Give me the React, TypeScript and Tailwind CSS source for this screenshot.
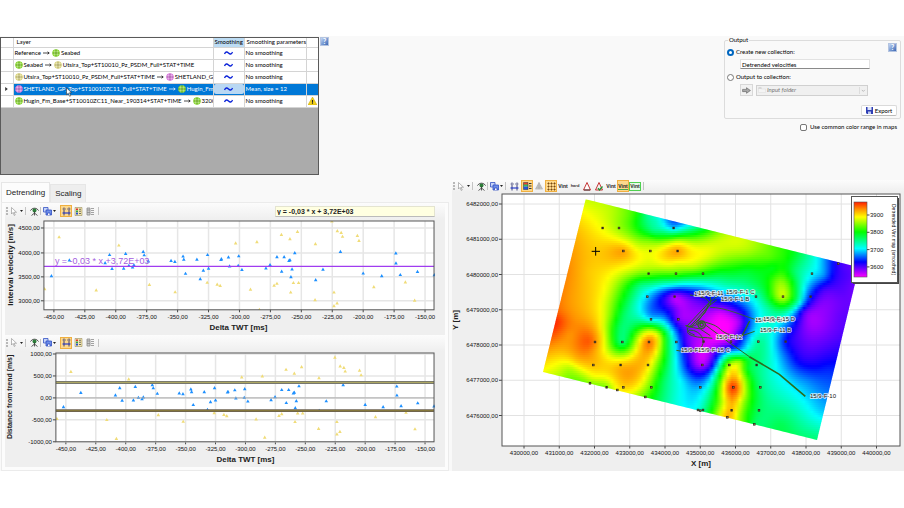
import { useState, type ReactNode } from 'react';
import clsx from 'clsx';

type Point = [number, number];
type Sample = [number, number, number];

const LIME = '#7fd321';
const KHAKI = '#d8d27a';
const PINK = '#d772dc';

const LAYERS = [
  { from: 'Reference', to: 'Seabed', toColor: LIME, params: 'No smoothing' },
  { from: 'Seabed', fromColor: LIME, to: 'Utsira_Top+ST10010_Pz_PSDM_Full+STAT+TIME', toColor: KHAKI, params: 'No smoothing' },
  { from: 'Utsira_Top+ST10010_Pz_PSDM_Full+STAT+TIME', fromColor: KHAKI, to: 'SHETLAND_GP_Top', toColor: PINK, params: 'No smoothing' },
  { from: 'SHETLAND_GP_Top+ST10010ZC11_Full+STAT+TIME', fromColor: PINK, to: 'Hugin_Fm_Base', toColor: LIME, params: 'Mean, size = 12' },
  { from: 'Hugin_Fm_Base+ST10010ZC11_Near_190314+STAT+TIME', fromColor: LIME, to: '3200_Base', toColor: LIME, params: 'No smoothing', warning: true },
];

const TREND = 3720;

// [delta TWT, distance from trend]
const INLIERS: Point[] = [
  [-452, -200], [-437.5, 125], [-408.6, 70], [-405, 235], [-403, -50], [-393.6, -45], [-392, 260], [-389.4, 15],
  [-386.4, -20], [-385.3, 25], [-377.8, 300], [-377, 230], [-373.6, 105], [-355.3, 115], [-352.2, 95], [-345.6, 205],
  [-345, 140], [-343.6, -150], [-334.4, 140], [-331.7, -260], [-329.2, -85], [-325.8, 235], [-325, -45], [-315, 135],
  [-314.6, 150], [-308.9, 185], [-308, 0], [-300.6, 210], [-301, 15], [-298, -70], [-278.6, -40], [-275.3, 30],
  [-269.7, 190], [-263.9, 190], [-265.9, -105], [-260, 115], [-259.2, 130], [-255.3, 275], [-257.5, -60], [-258.4, -220],
  [-238.4, -280], [-232.5, -65], [-218.4, 300], [-200, -145], [-185, -200], [-173.6, 270], [-173.5, 65], [-170, -175],
  [-156.1, -110], [-142.5, -180],
];

const OUTLIERS: Point[] = [
  [-457.5, -465], [-445.8, 600], [-415.8, -490], [-407.8, -920], [-397.5, 430], [-372.8, -380], [-352, -530],
  [-326.1, -335], [-318, -375], [-315.6, -400], [-303.1, 475], [-291.1, -475], [-285.9, 500], [-283.9, -890],
  [-272, -395], [-269.7, -355], [-266.1, 650], [-259.2, 560], [-258.6, -535], [-256.4, -340], [-252.2, -340],
  [-253.1, 710], [-238.6, 460], [-238.9, -690], [-225.3, 925], [-220.9, 725], [-217.8, 690], [-216.7, 610],
  [-223.6, -535], [-223.6, -815], [-221.1, -760], [-204.7, 630], [-203.4, 525], [-191.4, -425], [-165.9, -325],
  [-158.4, -700],
];

const TWT_TICKS = [-450, -425, -400, -375, -350, -325, -300, -275, -250, -225, -200, -175, -150];

// Velocity samples in map units, value 0 (low) to 100 (high)
const SAMPLES: Sample[] = [
  [137, 14, 76], [215, 33, 74], [290, 52, 62], [320, 60, 48], [360, 72, 40], [400, 80, 26], [440, 92, 38], [490, 104, 57],
  [540, 116, 72], [590, 128, 77], [640, 140, 74], [700, 153, 66], [760, 170, 58], [820, 185, 42], [860, 195, 28],
  [895, 206, 16], [940, 215, 12], [188, 99, 79], [237, 99, 72], [300, 99, 58], [340, 110, 50], [400, 99, 34],
  [430, 115, 54], [370, 118, 54], [350, 80, 44], [120, 100, 85], [110, 150, 88], [168, 168, 85], [250, 168, 89],
  [331, 168, 78], [413, 168, 89], [250, 140, 80], [290, 150, 76], [413, 135, 72], [380, 165, 84], [450, 175, 82],
  [500, 165, 79], [560, 160, 76], [620, 180, 71], [690, 190, 66], [330, 130, 66], [330, 195, 78], [85, 230, 91],
  [150, 230, 85], [220, 220, 82], [250, 200, 84], [280, 235, 72], [326, 236, 68], [408, 236, 66], [413, 205, 78],
  [489, 236, 60], [370, 215, 76], [460, 220, 72], [560, 215, 63], [540, 240, 54], [620, 225, 57], [700, 220, 58],
  [735, 200, 61], [760, 230, 52], [816, 236, 38], [850, 240, 31], [880, 240, 19], [920, 240, 14], [75, 290, 91],
  [150, 290, 85], [200, 290, 78], [240, 290, 66], [260, 270, 63], [280, 300, 50], [322, 305, 35], [300, 270, 50],
  [350, 270, 44], [400, 275, 34], [360, 300, 24], [404, 305, 6], [372, 330, 18], [440, 290, 20], [485, 305, 18],
  [480, 270, 37], [530, 300, 28], [560, 270, 45], [600, 300, 37], [648, 305, 43], [640, 265, 52], [690, 280, 62],
  [729, 305, 76], [720, 260, 71], [725, 235, 64], [760, 290, 60], [775, 320, 45], [790, 290, 38], [812, 305, 22],
  [850, 280, 16], [900, 290, 13], [945, 280, 11], [690, 340, 48], [725, 345, 52], [50, 380, 99], [55, 350, 94],
  [100, 360, 90], [150, 360, 86], [190, 370, 78], [220, 360, 66], [250, 360, 52], [290, 360, 44], [333, 373, 36],
  [370, 360, 27], [415, 373, 10], [400, 340, 13], [450, 340, 8], [510, 340, 10], [540, 355, 3], [550, 390, 0],
  [590, 345, 16], [600, 380, 8], [625, 370, 24], [650, 373, 35], [690, 390, 42], [740, 380, 32], [770, 370, 22],
  [790, 350, 15], [840, 360, 8], [900, 360, 12], [610, 330, 27], [485, 390, 6], [450, 400, 10], [90, 420, 90],
  [150, 440, 95], [40, 440, 92], [190, 430, 80], [165, 470, 88], [222, 430, 60], [247, 441, 49], [245, 400, 50],
  [275, 430, 62], [300, 400, 62], [330, 398, 66], [327, 441, 93], [300, 460, 84], [285, 465, 78], [355, 420, 76],
  [370, 440, 66], [385, 450, 52], [409, 441, 35], [400, 410, 34], [430, 440, 18], [490, 440, 4], [530, 430, 1],
  [573, 440, 8], [600, 430, 20], [620, 430, 30], [655, 440, 47], [640, 480, 50], [700, 440, 37], [737, 440, 21],
  [780, 440, 14], [840, 430, 11], [880, 430, 13], [600, 470, 35], [440, 480, 19], [485, 480, 3], [530, 475, 17],
  [487, 510, 6], [450, 520, 19], [485, 530, 16], [520, 510, 22], [545, 510, 50], [568, 510, 74], [560, 480, 40],
  [600, 500, 72], [620, 520, 58], [650, 510, 50], [700, 510, 40], [740, 480, 26], [780, 500, 19], [830, 515, 20],
  [860, 520, 22], [160, 510, 86], [110, 500, 85], [90, 520, 74], [20, 520, 80], [60, 540, 74], [130, 555, 70],
  [160, 545, 79], [200, 577, 70], [242, 510, 86], [250, 577, 84], [232, 585, 80], [324, 510, 83], [350, 510, 70],
  [375, 520, 55], [410, 520, 38], [300, 560, 82], [334, 577, 66], [316, 606, 66], [365, 560, 54], [400, 600, 43],
  [430, 560, 36], [481, 577, 33], [475, 645, 41], [520, 570, 48], [545, 580, 74], [580, 577, 99], [580, 540, 86],
  [612, 577, 76], [640, 577, 58], [661, 577, 50], [700, 560, 42], [740, 560, 37], [800, 560, 30], [850, 580, 28],
  [510, 650, 58], [540, 655, 76], [562, 667, 88], [575, 646, 87], [600, 660, 72], [625, 680, 60], [657, 646, 52],
  [643, 688, 52], [700, 650, 49], [720, 690, 53], [780, 660, 44], [800, 620, 37], [840, 650, 35], [830, 734, 50],
  [780, 720, 50], [550, 620, 76], [600, 620, 78], [575, 615, 90],
];

const WELL_MARKERS: Point[] = [
  [188, 99], [237, 99], [401, 99], [250, 168], [331, 168], [413, 168], [326, 236], [408, 236], [489, 236], [816, 236],
  [895, 206], [322, 305], [404, 305], [485, 305], [648, 305], [729, 305], [812, 305], [333, 373], [415, 373], [165, 441],
  [247, 441], [327, 441], [409, 441], [491, 440], [573, 440], [655, 440], [737, 440], [160, 510], [242, 510], [324, 510],
  [487, 510], [568, 510], [650, 510], [150, 565], [200, 577], [232, 585], [250, 577], [334, 577], [316, 606], [481, 577],
  [580, 577], [661, 577], [474, 645], [481, 647], [489, 645], [575, 646], [657, 646], [562, 667], [643, 688],
];

const WELL_LABELS = [
  { x: 694, y: 296, name: '15/9-19 A' },
  { x: 698, y: 295, name: '15/9-F-11' },
  { x: 726, y: 294, name: '15/9-F-1 C' },
  { x: 721, y: 301, name: '15/9-F-1 B' },
  { x: 755, y: 322, name: '15/9-19 SR' },
  { x: 763, y: 321, name: '15/9-F-15 D' },
  { x: 760, y: 332, name: '15/9-F-11 B' },
  { x: 716, y: 339, name: '15/9-F-12' },
  { x: 681, y: 352, name: '15/9-F-14' },
  { x: 698, y: 352, name: '15/9-F-15 C' },
  { x: 810, y: 398, name: '15/9-F-10' },
];

const COLOR_STOPS: [number, number[]][] = [
  [0, [255, 0, 255]],
  [20, [0, 0, 255]],
  [38, [0, 255, 255]],
  [60, [0, 255, 0]],
  [80, [255, 255, 0]],
  [90, [255, 150, 0]],
  [100, [255, 30, 0]],
];

function colorAt(value: number) {
  const v = Math.max(0, Math.min(100, value));
  const i = Math.max(1, COLOR_STOPS.findIndex(s => v <= s[0]));
  const [v0, c0] = COLOR_STOPS[i - 1];
  const [v1, c1] = COLOR_STOPS[i];
  const t = (v - v0) / (v1 - v0);
  return `rgb(${c0.map((c, k) => Math.round(c + (c1[k] - c) * t)).join(',')})`;
}

const kernel = (dx: number, dy: number) => {
  const r2 = dx * dx + dy * dy;
  return r2 === 0 ? 0 : r2 * Math.log(r2) * 0.5;
};

// Thin plate spline through the samples
function fitSurface(samples: Sample[]) {
  const pts = samples.map(([x, y, v]) => [x / 500, y / 500, v]);
  const n = pts.length;
  const size = n + 3;
  const m = Array.from({ length: size }, () => new Float64Array(size + 1));
  for (let i = 0; i < n; i++) {
    for (let j = 0; j < n; j++) m[i][j] = kernel(pts[i][0] - pts[j][0], pts[i][1] - pts[j][1]);
    m[i][i] = 0.0004;
    const base = [1, pts[i][0], pts[i][1]];
    base.forEach((b, k) => {
      m[i][n + k] = b;
      m[n + k][i] = b;
    });
    m[i][size] = pts[i][2];
  }
  for (let c = 0; c < size; c++) {
    let p = c;
    for (let r = c + 1; r < size; r++) if (Math.abs(m[r][c]) > Math.abs(m[p][c])) p = r;
    [m[c], m[p]] = [m[p], m[c]];
    for (let r = c + 1; r < size; r++) {
      const f = m[r][c] / m[c][c];
      if (f === 0) continue;
      for (let k = c; k <= size; k++) m[r][k] -= f * m[c][k];
    }
  }
  const w = new Float64Array(size);
  for (let r = size - 1; r >= 0; r--) {
    let s = m[r][size];
    for (let k = r + 1; k < size; k++) s -= m[r][k] * w[k];
    w[r] = s / m[r][r];
  }
  return (px: number, py: number) => {
    const x = px / 500;
    const y = py / 500;
    let s = w[n] + w[n + 1] * x + w[n + 2] * y;
    for (let i = 0; i < n; i++) s += w[i] * kernel(x - pts[i][0], y - pts[i][1]);
    return s;
  };
}

const surface = fitSurface(SAMPLES);
const STRIP = 6;
const MAP_WIDTH = 960;
const STRIPS = Array.from({ length: 122 }, (_, row) => {
  const y = 6 + row * STRIP;
  const stops = Array.from({ length: 81 }, (_, i) => colorAt(surface(i * 12, y + STRIP / 2)));
  return { y, stops };
});

function HorizonIcon({ color }: { color: string }) {
  return (
    <svg viewBox="0 0 16 16" className="size-2 shrink-0">
      <circle cx="8" cy="8" r="7.5" fill={color} />
      <path d="M5.5 1v14M10.5 1v14M1 5.5h14M1 10.5h14" stroke="#fff" strokeOpacity=".55" strokeWidth="1.2" />
      <path d="M8 1v14M1 8h14" stroke="#333" strokeOpacity=".45" strokeWidth="1" />
    </svg>
  );
}

function HelpButton() {
  return (
    <button
      aria-label="Help"
      className="flex size-[9px] shrink-0 items-center justify-center border border-[#b4c4e0] bg-linear-to-br from-[#c4d6f4] to-[#3c68b4] text-[7px] leading-none font-bold text-white"
    >
      ?
    </button>
  );
}

function LayerTable() {
  const [selected, setSelected] = useState(3);

  return (
    <div className="relative min-h-[138px] w-[35.3%] border border-[#5a5a5a] bg-[#ababab]">
      <table className="w-full table-fixed border-collapse bg-white text-left whitespace-nowrap">
        <thead>
          <tr className="h-[9px]">
            <th className="w-[12px] border-r border-b border-[#d4d4d4] p-0" />
            <th className="border-r border-b border-[#d4d4d4] p-0 pl-[3px] font-normal">Layer</th>
            <th className="w-[31px] border-r border-b border-[#d4d4d4] bg-[#bcdcf4] p-0 text-center font-normal">Smoothing</th>
            <th className="w-[62px] border-r border-b border-[#d4d4d4] p-0 pl-[2px] font-normal">Smoothing parameters</th>
            <th className="w-[12px] border-b border-[#d4d4d4] p-0" />
          </tr>
        </thead>
        <tbody>
          {LAYERS.map((layer, i) => {
            const active = i === selected;
            const cell = clsx('border-r border-b border-[#d4d4d4] p-0', active && 'bg-[#0078d7] text-white');
            return (
              <tr key={layer.from} className="h-[12px]" onClick={() => setSelected(i)}>
                <td className="border-r border-b border-[#d4d4d4] p-0">
                  {active && (
                    <svg viewBox="0 0 4 6" className="mx-auto h-1 w-[3px]"><path d="M0 0l4 3-4 3z" fill="#333" /></svg>
                  )}
                </td>
                <td className={cell}>
                  <div className="flex items-center gap-px overflow-hidden pl-px">
                    {layer.fromColor && <HorizonIcon color={layer.fromColor} />}
                    <span>{layer.from}</span>
                    <svg viewBox="0 0 14 8" className="mx-px h-1 w-[7px] shrink-0" fill="none" stroke="currentColor" strokeWidth="1.4"><path d="M0 4h12M9 1.5l3.5 2.5L9 6.5" /></svg>
                    <HorizonIcon color={layer.toColor} />
                    <span>{layer.to}</span>
                  </div>
                </td>
                <td className={cell}>
                  <button
                    aria-label="Edit smoothing"
                    className={clsx('flex h-[10px] w-full items-center justify-center', active ? 'rounded-xs bg-[#b9d8f3]' : 'bg-white')}
                  >
                    <svg viewBox="0 0 18 8" className="h-1 w-[9px]" fill="none" stroke="#0a22d8" strokeWidth="2.6"><path d="M1 6C3 1 6 1 9 4s6 3 8-2" /></svg>
                  </button>
                </td>
                <td className={clsx(cell, 'pl-px')}>{layer.params}</td>
                <td className={clsx('border-b border-[#d4d4d4] p-0', active && 'bg-[#0078d7]')}>
                  {layer.warning && (
                    <svg viewBox="0 0 16 14" className="mx-auto h-2 w-[9px]">
                      <path d="M8 0l8 14H0z" fill="#f3d21b" stroke="#c9a800" />
                      <path d="M8 5v5M8 11v1.5" stroke="#222" strokeWidth="2" />
                    </svg>
                  )}
                </td>
              </tr>
            );
          })}
        </tbody>
      </table>
      <svg viewBox="0 0 12 19" className="absolute top-[49px] left-[65px] h-[10px] w-[6px]">
        <path d="M1 1v14l3.5-3 2.5 6 2.5-1-2.5-6H11z" fill="#fff" stroke="#333" strokeWidth="1.2" />
      </svg>
    </div>
  );
}

function OutputPanel() {
  const [mode, setMode] = useState('new');
  const radio = 'size-[7px] appearance-none rounded-full border border-[#777] bg-white checked:border-2 checked:border-[#0067c0]';

  return (
    <div className="w-[177px]">
      <fieldset className="rounded-xs border border-[#dcdcdc] pr-[3px] pl-[2px] pb-[2px]">
        <legend className="ml-px px-px leading-[6px]">Output</legend>
        <div className="flex justify-between">
          <label className="mt-[5px] flex h-[8px] items-center gap-[2px]">
            <input type="radio" name="output" className={radio} checked={mode === 'new'} onChange={() => setMode('new')} />
            Create new collection:
          </label>
          <HelpButton />
        </div>
        <input
          aria-label="Collection name"
          defaultValue="Detrended velocities"
          className="mt-[3px] ml-[13px] block h-[10px] w-[130px] border border-[#e2e2e2] border-b-[#8a8a8a] bg-white pl-px"
        />
        <label className="mt-[4px] flex h-[8px] items-center gap-[2px]">
          <input type="radio" name="output" className={radio} checked={mode === 'existing'} onChange={() => setMode('existing')} />
          Output to collection:
        </label>
        <div className="mt-[3px] ml-[13px] flex items-center gap-[3px]">
          <button aria-label="Pick collection" className="flex h-[12px] w-[13px] items-center justify-center border border-[#d8d8d8] bg-[#f2f2f2]">
            <svg viewBox="0 0 16 12" className="h-[7px] w-[9px]"><path d="M1 4h7V1l7 5-7 5V8H1z" fill="#a8a8a8" stroke="#555" /></svg>
          </button>
          <div className="relative flex h-[11px] w-[112px] items-center border border-[#d0d0d0] bg-[#f0f0f0]">
            <svg viewBox="0 0 16 12" className="absolute left-px h-[6px] w-[8px]"><path d="M1 2h5l1 2h8v7H1z" fill="#f4f4f4" stroke="#ddd" /><path d="M1 2h6" stroke="#999" /></svg>
            <select disabled aria-label="Collection" className="h-full w-full appearance-none pl-[10px] text-[#777] italic">
              <option>Input folder</option>
            </select>
            <svg viewBox="0 0 10 10" className="absolute right-px size-[7px] border-l border-[#ddd]" fill="none" stroke="#999"><path d="M3 4l2.5 2.5L8 4" /></svg>
          </div>
        </div>
        <div className="mt-[9px] flex justify-end">
          <button className="flex h-[11px] w-[36px] items-center justify-center gap-[2px] rounded-xs border border-[#dadada] border-b-[#bbb] bg-white">
            <svg viewBox="0 0 14 14" className="size-[7px]"><path d="M0 0h14v14H2l-2-2z" fill="#2f3fb4" /><path d="M3 0h8v6H3z" fill="#dfe6fa" /><path d="M4 9h6v5H4z" fill="#bcc8ee" /></svg>
            Export
          </button>
        </div>
      </fieldset>
      <label className="mt-[4px] mr-[4px] flex items-center justify-end gap-[3px]">
        <input type="checkbox" className="size-[7px] appearance-none rounded-xs border border-[#777] bg-white checked:bg-[#0067c0]" />
        Use common color range in maps
      </label>
    </div>
  );
}

function ToolButton({ label, active, children }: { label: string; active?: boolean; children: ReactNode }) {
  return (
    <button
      aria-label={label}
      className={clsx('flex h-[12px] w-[12px] shrink-0 items-center justify-center', active && 'border border-[#f0b040] bg-[#fdd88c]')}
    >
      {children}
    </button>
  );
}

const Separator = () => <span className="mx-[2px] h-[8px] w-px shrink-0 bg-[#c4c4c4]" />;

const Caret = () => (
  <svg viewBox="0 0 6 4" className="h-[2px] w-[3px] shrink-0"><path d="M0 0h6L3 4z" fill="#222" /></svg>
);

const AxesIcon = () => (
  <svg viewBox="0 0 18 18" className="size-[9px]">
    <path d="M4 1v16M14 1v16" stroke="#2a2f6c" strokeWidth="1.8" />
    <path d="M1 12h16" stroke="#1a30c8" strokeWidth="2.2" />
    <path d="M1 4h2M6 4h2M10 4h2M15 4h2" stroke="#2a2f6c" strokeWidth="1.2" />
  </svg>
);

function BaseTools() {
  return (
    <>
      <span className="h-[8px] w-[2px] shrink-0 border-l-2 border-dotted border-[#b8b8b8]" />
      <ToolButton label="Select">
        <svg viewBox="0 0 12 18" className="h-[9px] w-[6px]"><path d="M1 1v13l3-3 2.5 6 2-1L6 10.500h5z" fill="#fff" stroke="#8a8a8a" strokeWidth="1.2" /></svg>
      </ToolButton>
      <Caret />
      <Separator />
      <ToolButton label="Visibility">
        <svg viewBox="0 0 18 18" className="size-[9px]">
          <path d="M1 7c4-6 12-6 16 0" fill="none" stroke="#333" strokeWidth="2" />
          <circle cx="9" cy="7" r="4" fill="#2d7f3a" />
          <path d="M9 9v8M9 12l-6 5M9 12l6 5" stroke="#333" strokeWidth="1.6" />
        </svg>
      </ToolButton>
      <span className="h-[8px] w-px shrink-0 bg-[#c4c4c4]" />
      <ToolButton label="Copy">
        <svg viewBox="0 0 18 18" className="size-[9px]" stroke="#2a49c0" strokeWidth="1.5">
          <path d="M1 1h9v9H1z" fill="#c6d4f8" />
          <path d="M6 6h11v10H6z" fill="#6f8fe8" />
          <path d="M9 16v-4h5v4" fill="#fff" />
        </svg>
      </ToolButton>
      <Caret />
    </>
  );
}

const LegendIcon = () => (
  <svg viewBox="0 0 18 18" className="size-[9px]">
    <path d="M2 1h14v16H2z" fill="#f3e6ae" stroke="#887c4a" />
    <path d="M4 3h4v3H4z" fill="#e03030" /><path d="M4 7h4v3H4z" fill="#2fa040" /><path d="M4 11h4v4H4z" fill="#2850d0" />
    <path d="M10 4.500h4M10 8.500h4M10 13h4" stroke="#444" strokeWidth="1.5" />
  </svg>
);

function ChartToolbar({ children }: { children?: ReactNode }) {
  return (
    <div className="flex h-[16px] items-center bg-linear-to-b from-[#fcfcfc] to-[#efefef] pl-px">
      <BaseTools />
      <span className="w-[4px]" />
      <ToolButton label="Axes" active><AxesIcon /></ToolButton>
      <ToolButton label="Legend"><LegendIcon /></ToolButton>
      <ToolButton label="List">
        <svg viewBox="0 0 18 18" className="size-[9px]" stroke="#8c8c8c" strokeWidth="1.6"><path d="M2 2h6v14H2z" fill="#ccc" /><path d="M2 6h6M2 11h6M10 3h6M10 7h6M10 11h6M10 15h6" /></svg>
      </ToolButton>
      <Separator />
      {children}
    </div>
  );
}

interface ScatterProps {
  viewBox: string;
  left: number;
  top: number;
  bottom: number;
  x0: number;
  xStep: number;
  yTicks: { y: number; label: string }[];
  toY: (distance: number) => number;
  clipId: string;
  children: ReactNode;
}

function Scatter({ viewBox, left, top, bottom, x0, xStep, yTicks, toY, clipId, children }: ScatterProps) {
  const toX = (twt: number) => x0 + ((twt + 450) / 25) * xStep;
  const right = 435;
  const marker = ([twt, d]: Point) => `M${toX(twt) - 1.8} ${toY(d) + 1.6}h3.6l-1.800-3.200z`;

  return (
    <svg viewBox={viewBox} className="block w-full bg-[#efefef] text-[6px]" fill="#111">
      <clipPath id={clipId}><rect x={left} y={top} width={right - left + 1} height={bottom - top} /></clipPath>
      <rect x={left} y={top} width={right - left} height={bottom - top} fill="#fff" />
      {TWT_TICKS.map(t => (
        <g key={t}>
          <path d={`M${toX(t)} ${top}V${bottom}`} stroke="#e6e6e6" strokeWidth="1.5" />
          <path d={`M${toX(t)} ${bottom}v2.500`} stroke="#444" />
          <text x={toX(t)} y={bottom + 9} textAnchor="middle">{t},00</text>
        </g>
      ))}
      {yTicks.map(t => (
        <g key={t.label}>
          <path d={`M${left} ${t.y}H${right}`} stroke="#e6e6e6" strokeWidth="1.5" />
          <path d={`M${left - 3} ${t.y}H${left}`} stroke="#444" />
          <text x={left - 4} y={t.y + 2} textAnchor="end">{t.label}</text>
        </g>
      ))}
      <g clipPath={`url(#${clipId})`}>
        <path d={OUTLIERS.map(marker).join('')} fill="#f0dc78" />
        <path d={INLIERS.map(marker).join('')} fill="#1e90ff" />
      </g>
      {children}
      <rect x={left} y={top} width={right - left} height={bottom - top} fill="none" stroke="#555" />
    </svg>
  );
}

function DetrendingPanel() {
  const [tab, setTab] = useState('Detrending');

  return (
    <section className="w-1/2 pr-[3px] pl-px">
      <div role="tablist" className="flex items-end pt-[2px] text-[8px]">
        {['Detrending', 'Scaling'].map(name => (
          <button
            key={name}
            role="tab"
            aria-selected={tab === name}
            onClick={() => setTab(name)}
            className={clsx('border border-b-0 border-[#e6e6e6] px-[4px]', tab === name ? 'h-[20px] bg-[#fcfcfc]' : 'h-[18px] bg-[#eeeeee]')}
          >
            {name}
          </button>
        ))}
      </div>
      <div className="border border-[#ebebeb] bg-[#fcfcfc] px-[3px] pb-[3px]">
        <ChartToolbar>
          <input
            readOnly
            aria-label="Trend equation"
            value="y = -0,03 * x + 3,72E+03"
            className="mr-[10px] ml-auto h-[11px] w-[160px] border border-[#e4e4d0] border-b-[#bbb] bg-[#ffffe1] px-px text-[7px] font-bold text-[#222]"
          />
        </ChartToolbar>
        <Scatter
          viewBox="5 219 441 116"
          left={44}
          top={221}
          bottom={310}
          x0={54}
          xStep={31}
          clipId="velocity-plot"
          toY={d => 228 + (4500 - TREND - d) * 0.0488}
          yTicks={[{ y: 228, label: '4500,00' }, { y: 253, label: '4000,00' }, { y: 277, label: '3500,00' }, { y: 301, label: '3000,00' }]}
        >
          <path d="M44 266.500H435" stroke="#a03cf0" strokeWidth="1.400" />
          <text x="55" y="264" fill="#a45ce0" className="text-[9px]">y = -0,03 * x +3,72E+03</text>
          <text x="239" y="330" textAnchor="middle" className="text-[8px] font-bold" fill="#222">Delta TWT [ms]</text>
          <text transform="translate(13 265) rotate(-90)" textAnchor="middle" className="text-[8px] font-bold" fill="#222">Interval velocity [m/s]</text>
        </Scatter>
        <ChartToolbar />
        <Scatter
          viewBox="5 350 441 117"
          left={56}
          top={352}
          bottom={441}
          x0={66}
          xStep={30}
          clipId="distance-plot"
          toY={d => 397 - d * 0.0442}
          yTicks={[{ y: 353, label: '1000,00' }, { y: 375, label: '500,00' }, { y: 397, label: '0,00' }, { y: 419, label: '-500,00' }, { y: 441, label: '-1000,00' }]}
        >
          <path d="M56 397H435" stroke="#aaa" />
          <path d="M56 381.500H435" stroke="#77776e" strokeWidth="3" />
          <path d="M56 381.500H435" stroke="#c0b860" strokeWidth=".8" />
          <path d="M56 409.800H435" stroke="#6c6250" strokeWidth="2.600" />
          <path d="M56 409.800H435" stroke="#948434" strokeWidth=".8" />
          <text x="246" y="461" textAnchor="middle" className="text-[8px] font-bold" fill="#222">Delta TWT [ms]</text>
          <text transform="translate(12 396) rotate(-90)" textAnchor="middle" className="text-[7px] font-bold" fill="#222">Distance from trend [m/s]</text>
        </Scatter>
      </div>
    </section>
  );
}

const TagText = ({ children }: { children: string }) => (
  <span className="text-[5px] leading-[6px] font-bold text-[#222]">{children}</span>
);

function MapToolbar() {
  return (
    <div className="flex h-[12px] items-center bg-linear-to-b from-[#fcfcfc] to-[#efefef] pl-px">
      <BaseTools />
      <Separator />
      <ToolButton label="Axes"><AxesIcon /></ToolButton>
      <span className="w-px" />
      <ToolButton label="Color legend" active>
        <svg viewBox="0 0 18 16" className="h-[8px] w-[9px]">
          <path d="M1 1h9v5H1z" fill="#e8402c" /><path d="M1 5h9v4H1z" fill="#30c060" /><path d="M1 9h9v6H1z" fill="#2456dc" />
          <path d="M1 1h9v14H1z" fill="none" stroke="#234" /><path d="M12 3h5M12 8h5M12 13h5" stroke="#333" strokeWidth="2" />
        </svg>
      </ToolButton>
      <ToolButton label="Shading">
        <svg viewBox="0 0 18 18" className="size-[8px]" stroke="#999" fill="#ccc"><path d="M9 1l8 15H1z" /><path d="M5 9h8M3 13h12M9 1v15" /></svg>
      </ToolButton>
      <ToolButton label="Grid" active>
        <svg viewBox="0 0 18 18" className="size-[9px]" fill="none" stroke="#7a4a10" strokeWidth="2"><path d="M3 1v16M9 1v16M15 1v16M1 3h16M1 9h16M1 15h16" strokeDasharray="4 2" /></svg>
      </ToolButton>
      <ToolButton label="Interval velocity"><TagText>Vint</TagText></ToolButton>
      <ToolButton label="Horizon"><span className="text-[4px] leading-none font-bold text-[#333]">hard</span></ToolButton>
      <ToolButton label="Triangulation">
        <svg viewBox="0 0 16 18" className="h-[9px] w-[8px]" fill="#fff" strokeWidth="1.800"><path d="M8 1l7 15H1z" stroke="#c02020" /><path d="M2 16h12" stroke="#333" /></svg>
      </ToolButton>
      <ToolButton label="Accept triangulation">
        <svg viewBox="0 0 16 18" className="h-[9px] w-[8px]" fill="none" strokeWidth="1.800"><path d="M8 1l7 15H1z" stroke="#c02020" /><path d="M6 12l3 4 6-7" stroke="#209030" strokeWidth="2.500" /></svg>
      </ToolButton>
      <ToolButton label="Edit velocity"><TagText>Vint</TagText></ToolButton>
      <ToolButton label="Accept velocity" active>
        <span className="flex items-center border-b border-[#48a848]"><TagText>Vint</TagText></span>
      </ToolButton>
      <ToolButton label="Frame velocity">
        <span className="flex h-[9px] items-center border border-[#50d050] bg-[#e6fbe6]"><TagText>Vint</TagText></span>
      </ToolButton>
      <Separator />
    </div>
  );
}

function VelocitySurface() {
  return (
    <g transform="translate(540 195) scale(.33333)">
      <clipPath id="survey"><path d="M137 13L957 217 831 735 9 531z" /></clipPath>
      <g clipPath="url(#survey)">
        {STRIPS.map(({ y, stops }) => (
          <g key={y}>
            <linearGradient id={`strip-${y}`}>
              {stops.map((color, i) => <stop key={i} offset={i / (stops.length - 1)} stopColor={color} />)}
            </linearGradient>
            <rect y={y} width={MAP_WIDTH} height={STRIP + 1} fill={`url(#strip-${y})`} />
          </g>
        ))}
      </g>
      <g fill="none" stroke="#2c6b1c" strokeWidth="3">
        <path d="M796 604l-78-66-90-53" strokeWidth="5" />
        <path d="M628 485l-60-42-70-52" />
        <path d="M437 392c30 10 40-16 60-10s30 8 45 22 40 20 62 19l40-14" />
        <path d="M604 424c10-14 16-30 25-46" strokeWidth="4" />
        <path d="M645 373c-40-12-90-36-135-36" strokeWidth="2.500" />
        <path d="M450 300c22 3 46 2 58 22l-12 30-44 46M440 394l66-70 36-28M445 400l60-66 26-20M512 305v22l-44 60" />
        <path d="M409 466c30 6 66 4 74-8 12-14 8-40-18-50-24-8-32 6-8 14 20 8 40 4 60 8" />
        <path d="M437 392l24 6 20 4 30 20M442 398c-2 12 8 16 22 22" />
        <circle cx="485" cy="389" r="11" strokeWidth="4" />
        <circle cx="485" cy="389" r="5" strokeWidth="4" />
      </g>
      {WELL_MARKERS.map(([x, y]) => (
        <rect key={`${x}-${y}`} x={x - 2.5} y={y - 2.5} width="5" height="5" fill="#c08030" stroke="#222" strokeWidth="2" />
      ))}
      <path d="M155 169h25M167 156v26" stroke="#000" strokeWidth="3" />
    </g>
  );
}

function MapPanel() {
  const toX = (i: number) => 524 + i * 35.25;
  const toY = (i: number) => 204 + i * 35.25;

  return (
    <section className="w-1/2 bg-[#efefef]">
      <MapToolbar />
      <svg viewBox="452 192 452 279" className="block w-full text-[6px]" fill="#111">
        <rect x="502" y="194" width="398" height="252" fill="#fff" />
        {Array.from({ length: 11 }, (_, i) => (
          <g key={i}>
            <path d={`M${toX(i)} 194V446`} stroke="#e2e2e2" />
            <path d={`M${toX(i)} 446v2.500`} stroke="#444" />
            <text x={toX(i)} y="455" textAnchor="middle">{430000 + i * 1000},00</text>
          </g>
        ))}
        {Array.from({ length: 7 }, (_, i) => (
          <g key={i}>
            <path d={`M502 ${toY(i)}H900`} stroke="#e2e2e2" />
            <path d={`M499 ${toY(i)}H502`} stroke="#444" />
            <text x="498" y={toY(i) + 2} textAnchor="end">{6482000 - i * 1000},00</text>
          </g>
        ))}
        <VelocitySurface />
        <g fill="#111" stroke="#fff" strokeOpacity=".8" strokeWidth="1.500" paintOrder="stroke">
          {WELL_LABELS.map(w => <text key={w.name} x={w.x} y={w.y}>{w.name}</text>)}
        </g>
        <rect x="502" y="194" width="398" height="252" fill="none" stroke="#555" />
        <linearGradient id="legend" x1="0" x2="0" y1="1" y2="0">
          {COLOR_STOPS.map(([v]) => <stop key={v} offset={v / 100} stopColor={colorAt(v)} />)}
        </linearGradient>
        <rect x="853" y="198" width="46" height="86" fill="#444" />
        <rect x="851.500" y="196.500" width="46" height="86" fill="#fff" stroke="#555" />
        <rect x="854" y="202" width="13" height="75" fill="url(#legend)" stroke="#555" strokeWidth=".6" />
        {[3900, 3800, 3700, 3600].map((v, i) => (
          <g key={v}>
            <path d={`M867 ${215 + i * 17.3}h2.500`} stroke="#444" />
            <text x="870" y={217 + i * 17.3}>{v}</text>
          </g>
        ))}
        <text transform="translate(892 204) rotate(90)" className="text-[5px]">Detrended Vint map (smoothed)</text>
        <text x="701" y="466" textAnchor="middle" className="text-[8px] font-bold" fill="#222">X [m]</text>
        <text transform="translate(458 320) rotate(-90)" textAnchor="middle" className="text-[8px] font-bold" fill="#222">Y [m]</text>
      </svg>
    </section>
  );
}

export default function App() {
  return (
    <div className="min-h-screen bg-white pt-[36px] font-['Liberation_Sans',Arial,sans-serif] text-[#222]">
      <main className="bg-[#f9f9f9]">
        <div className="flex items-start pt-px font-[Lato,'Liberation_Sans',sans-serif] text-[6px] leading-[8px] text-black">
          <LayerTable />
          <div className="ml-px"><HelpButton /></div>
          <div className="mr-[3px] ml-auto"><OutputPanel /></div>
        </div>
        <div className="mt-[5px] flex items-start">
          <DetrendingPanel />
          <MapPanel />
        </div>
      </main>
    </div>
  );
}
